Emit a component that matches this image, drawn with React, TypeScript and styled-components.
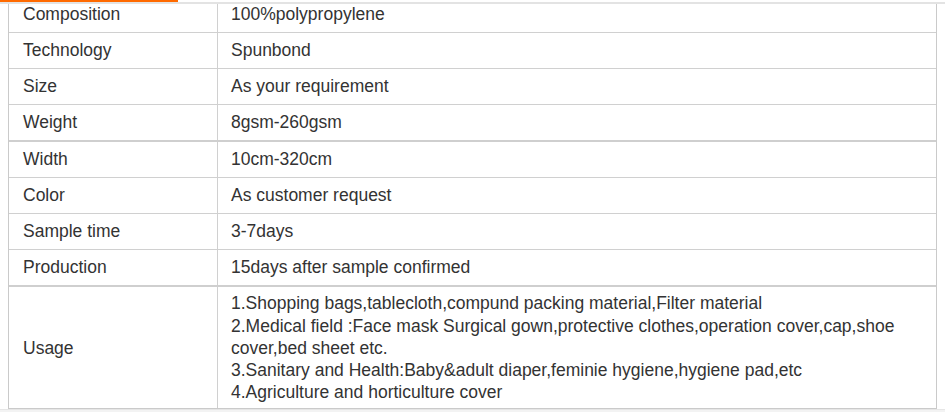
import React from "react";
import styled, { createGlobalStyle } from "styled-components";

const Global = createGlobalStyle`
  html, body { margin: 0; padding: 0; background: #fff; }
  body { font-family: Arial, "Liberation Sans", sans-serif; color: #333; }
`;

const Page = styled.div`
  width: 945px;
  height: 412px;
  overflow: hidden;
  display: flex;
  flex-direction: column;
`;

const Accent = styled.div`
  width: 178px;
  height: 2px;
  flex: none;
  background: #ff6a00;
`;

const GrayBar = styled.div`
  height: 2px;
  flex: none;
  background: #e3e3e3;
`;

const Table = styled.div`
  margin-left: 8px;
  width: 929px;
  flex: none;
  border-left: 1px solid #cacaca;
  border-right: 1px solid #cacaca;
  border-bottom: 1px solid #cacaca;
  box-sizing: border-box;
`;

const Bottom = styled.div`
  flex: 1;
  background: #f3f3f3;
  border-top: 1px solid #e6e6e6;
`;

const Row = styled.div<{ $thick?: boolean; $first?: boolean }>`
  display: grid;
  grid-template-columns: 208px 1fr;
  border-top: ${(p) => (p.$first ? "none" : p.$thick ? "2px solid #cfcfcf" : "1px solid #d0d0d0")};
`;

const Cell = styled.div<{ $first?: boolean; $divider?: boolean; $tall?: boolean }>`
  display: flex;
  align-items: center;
  box-sizing: border-box;
  height: ${(p) => (p.$tall ? "121px" : p.$first ? "28px" : "35px")};
  padding: ${(p) => (p.$first ? "0 13px 9px" : p.$tall ? "1px 13px 0" : "0 13px 1px")};
  padding-left: ${(p) => (p.$divider ? "13px" : "14px")};
  border-left: ${(p) => (p.$divider ? "1px solid #d0d0d0" : "none")};
  font-size: 17.5px;
  line-height: ${(p) => (p.$tall ? "22.3px" : "22px")};
  color: #333;
`;

const Lines = styled.div`
  display: flex;
  flex-direction: column;
`;

const rows: [string, string][] = [
  ["Composition", "100%polypropylene"],
  ["Technology", "Spunbond"],
  ["Size", "As your requirement"],
  ["Weight", "8gsm-260gsm"],
  ["Width", "10cm-320cm"],
  ["Color", "As customer request"],
  ["Sample time", "3-7days"],
  ["Production", "15days after sample confirmed"],
];

const usage = [
  "1.Shopping bags,tablecloth,compund packing material,Filter material",
  "2.Medical field :Face mask Surgical gown,protective clothes,operation cover,cap,shoe",
  "cover,bed sheet etc.",
  "3.Sanitary and Health:Baby&adult diaper,feminie hygiene,hygiene pad,etc",
  "4.Agriculture and horticulture cover",
];

export default function App() {
  return (
    <Page>
      <Global />
      <Accent />
      <GrayBar />
      <Table>
        {rows.map(([k, v], i) => (
          <Row key={k} $first={i === 0} $thick={i === 4}>
            <Cell $first={i === 0}>{k}</Cell>
            <Cell $first={i === 0} $divider>
              {v}
            </Cell>
          </Row>
        ))}
        <Row $thick>
          <Cell $tall>Usage</Cell>
          <Cell $tall $divider>
            <Lines>
              {usage.map((l) => (
                <span key={l}>{l}</span>
              ))}
            </Lines>
          </Cell>
        </Row>
      </Table>
      <Bottom />
    </Page>
  );
}
